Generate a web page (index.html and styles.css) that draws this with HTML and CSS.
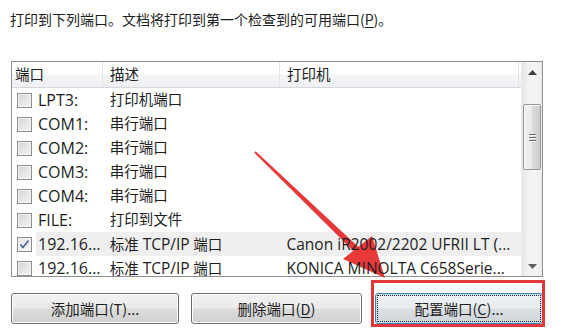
FILE: index.html
```html
<!DOCTYPE html>
<html lang="zh">
<head>
<meta charset="utf-8">
<link rel="stylesheet" href="styles.css">
</head>
<body>
<div class="page">
  <p class="intro">打印到下列端口。文档将打印到第一个检查到的可用端口(<u>P</u>)。</p>
  <div class="listbox">
    <div class="listmain">
      <div class="header">
        <div class="hcell c1">端口</div>
        <div class="hcell c2">描述</div>
        <div class="hcell c3">打印机</div>
      </div>
      <div class="rows">
        <div class="row"><span class="cb"></span><span class="cell c1t">LPT3:</span><span class="cell c2t">打印机端口</span><span class="cell c3t"></span></div>
        <div class="row"><span class="cb"></span><span class="cell c1t">COM1:</span><span class="cell c2t">串行端口</span><span class="cell c3t"></span></div>
        <div class="row"><span class="cb"></span><span class="cell c1t">COM2:</span><span class="cell c2t">串行端口</span><span class="cell c3t"></span></div>
        <div class="row"><span class="cb"></span><span class="cell c1t">COM3:</span><span class="cell c2t">串行端口</span><span class="cell c3t"></span></div>
        <div class="row"><span class="cb"></span><span class="cell c1t">COM4:</span><span class="cell c2t">串行端口</span><span class="cell c3t"></span></div>
        <div class="row"><span class="cb"></span><span class="cell c1t">FILE:</span><span class="cell c2t">打印到文件</span><span class="cell c3t"></span></div>
        <div class="row selected"><span class="cb checked"><svg viewBox="0 0 15 15" width="15" height="15"><path d="M3.5 7.5 L6 10.5 L11.5 3.5" fill="none" stroke="#4a5a98" stroke-width="1.6"/></svg></span><span class="cell c1t">192.16...</span><span class="cell c2t">标准 <span class="lat">TCP/IP</span> 端口</span><span class="cell c3t">Canon iR2002/2202 UFRII LT (...</span></div>
        <div class="row"><span class="cb"></span><span class="cell c1t">192.16...</span><span class="cell c2t">标准 <span class="lat">TCP/IP</span> 端口</span><span class="cell c3t">KONICA MINOLTA C658Serie...</span></div>
      </div>
    </div>
    <div class="scrollbar">
      <div class="sarrow"><svg width="9" height="5" viewBox="0 0 9 5"><path d="M0 5 L4.5 0 L9 5 Z" fill="#404040"/></svg></div>
      <div class="strack">
        <div class="thumb"><span class="grip"></span><span class="grip"></span><span class="grip"></span></div>
      </div>
      <div class="sarrow"><svg width="9" height="5" viewBox="0 0 9 5"><path d="M0 0 L4.5 5 L9 0 Z" fill="#606060"/></svg></div>
    </div>
  </div>
  <div class="buttons">
    <button class="btn b1">添加端口(T)...</button>
    <button class="btn b2">删除端口(<u>D</u>)</button>
    <button class="btn b3 focused"><span class="focusrect">配置端口(<u>C</u>)...</span></button>
  </div>
  <div class="redbox"></div>
  <svg class="arrow" width="569" height="336" viewBox="0 0 569 336">
    <path d="M255.7 151.3 L361.1 249.6 L356.9 254.4 L254.3 152.7 Z" fill="#e8393a"/>
    <path d="M343 259 L372 236 L385 278 Z" fill="#e8393a"/>
  </svg>
</div>
</body>
</html>
```
FILE: styles.css
```css
html, body {
  margin: 0;
  padding: 0;
  background: #ffffff;
}
.page {
  position: relative;
  width: 569px;
  height: 336px;
  font-family: "Open Sans", "Noto Sans CJK SC", sans-serif;
  font-size: 14px;
  color: #1e1e1e;
  padding: 10px 0 0 10px;
  box-sizing: border-box;
  overflow: hidden;
}
.intro {
  margin: 0;
  line-height: 18px;
  height: 18px;
  font-family: "Noto Sans CJK SC", sans-serif;
}
.intro u { text-decoration-thickness: 1px; text-underline-offset: 2px; }
.listbox {
  margin: 33px 0 0 1px;
  width: 532px;
  height: 216px;
  border: 1px solid #8c8f94;
  box-sizing: border-box;
  display: flex;
  overflow: hidden;
}
.listmain {
  flex: 1;
  display: flex;
  flex-direction: column;
  overflow: hidden;
}
.header {
  height: 26px;
  flex: none;
  display: flex;
  background: linear-gradient(#ffffff 0%, #ffffff 45%, #f2f4f6 55%, #eef0f3 100%);
  border-bottom: 1px solid #d6d8dc;
  box-sizing: border-box;
}
.hcell {
  box-sizing: border-box;
  padding-left: 3px;
  line-height: 24px;
  border-right: 1px solid #e3e4e6;
  font-family: "Noto Sans CJK SC", sans-serif;
  font-size: 14.5px;
}
.hcell.c1 { width: 91px; }
.hcell.c2 { width: 177px; padding-left: 7px; }
.hcell.c3 { width: 239px; padding-left: 7px; border-right: 1px solid #e0e1e3; }
.rows { flex: 1; }
.row {
  height: 24px;
  display: flex;
  align-items: center;
  white-space: nowrap;
  position: relative;
}
.row.selected::before {
  content: "";
  position: absolute;
  left: 24px;
  top: 0;
  bottom: 0;
  right: 0;
  background: #efefef;
  z-index: 0;
}
.cb, .cell { position: relative; z-index: 1; }
.cb {
  flex: none;
  width: 15px;
  height: 15px;
  margin-left: 5px;
  box-sizing: border-box;
  border: 1px solid #8e8f8f;
  background: linear-gradient(135deg, #d4d4d4 0%, #e8e8e8 60%, #f6f6f6 100%);
  box-shadow: inset 0 0 0 1px #f4f4f4;
  display: block;
}
.cb.checked { background: linear-gradient(135deg, #e4e4e4 0%, #f2f2f2 60%, #fafafa 100%); }
.cb svg { display: block; margin: -1px; }
.cell { line-height: 24px; overflow: hidden; }
.c1t { width: 72px; margin-left: 6px; font-size: 16px; }
.c2t { width: 177px; font-size: 14.5px; }
.c2t .lat { font-size: 15.5px; }
.c3t { width: 235px; font-size: 15.5px; }
.scrollbar {
  flex: none;
  width: 20px;
  display: flex;
  flex-direction: column;
  background: linear-gradient(90deg, #e6e6e6, #f2f2f2 30%, #f4f4f4 70%, #ececec);
  border-left: 1px solid #ececec;
}
.sarrow {
  height: 20px;
  flex: none;
  display: flex;
  align-items: center;
  justify-content: center;
}
.strack {
  flex: 1;
  padding-top: 22px;
}
.thumb {
  height: 66px;
  margin: 0 1px 0 1px;
  border: 1px solid #979797;
  border-radius: 2px;
  box-sizing: border-box;
  background: linear-gradient(90deg, #f3f3f3 0%, #e9e9e9 45%, #d9d9d9 55%, #cfcfcf 100%);
  box-shadow: inset 1px 1px 0 #fafafa;
  display: flex;
  flex-direction: column;
  align-items: center;
  justify-content: center;
  gap: 2px;
}
.grip {
  width: 7px;
  height: 1px;
  background: #6d6d6d;
  box-shadow: 0 1px 0 #f5f5f5;
}
.buttons {
  display: flex;
  margin-top: 16px;
  margin-left: 1px;
}
.btn {
  height: 31px;
  box-sizing: border-box;
  border: 1px solid #707070;
  border-radius: 3px;
  background: linear-gradient(#f2f2f2 0%, #ebebeb 48%, #dddddd 52%, #cfcfcf 100%);
  box-shadow: inset 0 0 0 1px #fcfcfc;
  font-family: "Noto Sans CJK SC", sans-serif;
  font-size: 14.5px;
  color: #1e1e1e;
  padding: 0;
  display: flex;
  align-items: center;
  justify-content: center;
}
.btn u { text-underline-offset: 2px; }
.b1 { width: 168px; }
.b2 { width: 171px; margin-left: 12px; }
.b3 { width: 168px; margin-left: 13px; }
.focused {
  border-color: #3c7fb1;
  background: linear-gradient(#f0f2f4 0%, #e8ecef 48%, #dadfe3 52%, #cfd5da 100%);
  box-shadow: inset 0 0 0 1px #c8e4f4;
}
.focusrect {
  align-self: stretch;
  flex: 1;
  margin: 2px;
  outline: 1px dotted #202020;
  display: flex;
  align-items: center;
  justify-content: center;
}
.redbox {
  position: absolute;
  left: 371px;
  top: 280px;
  width: 174px;
  height: 47px;
  border: 3px solid #e2383b;
  box-sizing: border-box;
}
.arrow {
  position: absolute;
  left: 0;
  top: 0;
  pointer-events: none;
}
```
